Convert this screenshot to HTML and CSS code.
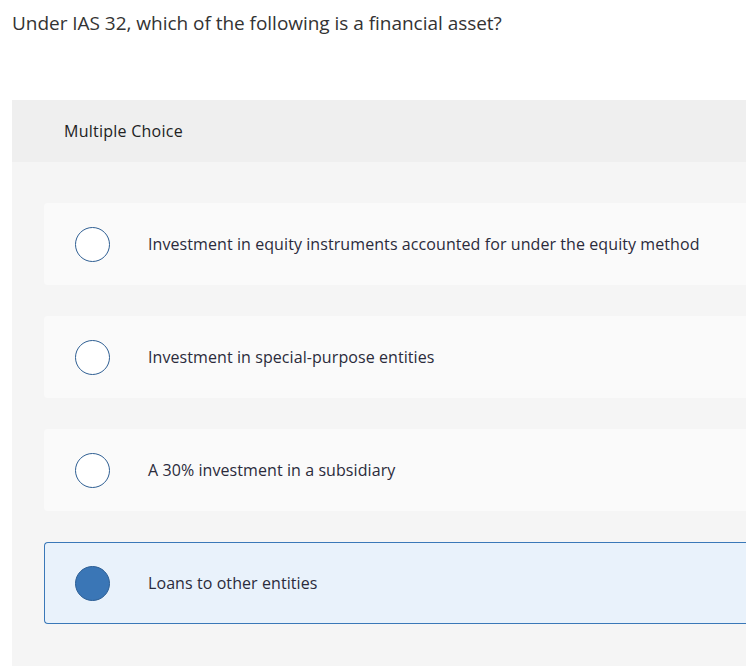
FILE: index.html
```html
<!DOCTYPE html>
<html>
<head>
<meta charset="utf-8">
<link rel="stylesheet" href="styles.css">
</head>
<body>
<h1 class="question">Under IAS 32, which of the following is a financial asset?</h1>
<section class="panel">
  <div class="panel-head">Multiple Choice</div>
  <div class="panel-body">
    <div class="option"><span class="radio"></span><span class="label">Investment in equity instruments accounted for under the equity method</span></div>
    <div class="option"><span class="radio"></span><span class="label">Investment in special-purpose entities</span></div>
    <div class="option"><span class="radio"></span><span class="label">A 30% investment in a subsidiary</span></div>
    <div class="option selected"><span class="radio"></span><span class="label">Loans to other entities</span></div>
  </div>
</section>
</body>
</html>
```
FILE: styles.css
```css
html, body { margin: 0; padding: 0; background: #fff; overflow: hidden; }
body { font-family: "Open Sans", "Liberation Sans", sans-serif; color: #333; width: 746px; height: 666px; }
.question { margin: 0; padding: 10px 0 0 12px; font-size: 19px; font-weight: 400; line-height: 26px; color: #333; height: 90px; box-sizing: border-box; letter-spacing: -0.03px; }
.panel { margin: 10px 0 0 12px; width: 760px; }
.panel-head { background: #efefef; height: 62px; padding-left: 52px; display: flex; align-items: center; font-size: 16px; color: #222; letter-spacing: 0.25px; }
.panel-body { background: #f5f5f5; padding: 41px 0 50px 32px; display: flex; flex-direction: column; gap: 31px; }
.option { background: #fafafa; height: 82px; border-radius: 4px 0 0 4px; display: flex; align-items: center; padding-left: 30px; box-sizing: border-box; border: 1px solid transparent; border-right: none; }
.option .radio { width: 33px; height: 33px; border-radius: 50%; border: 1px solid #2f5f93; background: #fff; flex: none; }
.option .label { margin-left: 38px; font-size: 16px; color: #2b2b3b; letter-spacing: 0.08px; }
.option.selected { background: #e9f2fb; border-color: #3a78b8; }
.option.selected .radio { background: #3a76b6; border-color: #2d5f95; }
```
